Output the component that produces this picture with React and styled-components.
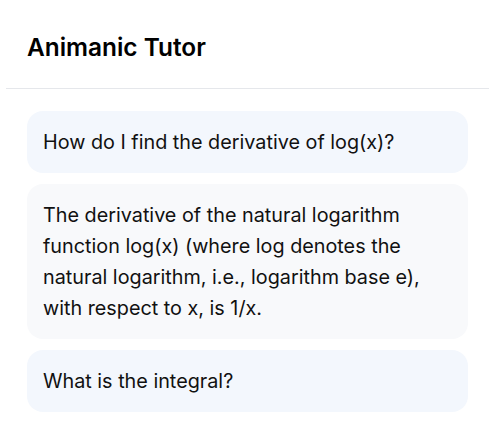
import React from "react";
import styled, { createGlobalStyle } from "styled-components";

const Global = createGlobalStyle`
  html, body { margin: 0; padding: 0; background: #ffffff; }
  body { font-family: Inter, "Noto Sans", sans-serif; color: #111111; }
`;

const Page = styled.div`
  padding: 0 11px 0 6px;
`;

const Header = styled.header`
  padding: 33px 21px 26px;
  border-bottom: 1px solid #e5e7eb;
`;

const Title = styled.h1`
  margin: 0;
  font-size: 24.4px;
  line-height: 29px;
  font-weight: 600;
  color: #000000;
`;

const MessageList = styled.div`
  display: flex;
  flex-direction: column;
  gap: 11px;
  padding: 22px 21px;
`;

const Bubble = styled.div`
  background: ${(p) => (p.$role === "user" ? "#f3f7fd" : "#f8f9fb")};
  border-radius: 16px;
  padding: 15.5px 16px;
  font-size: 19.8px;
  line-height: 31px;
  color: #111111;
`;

const messages = [
  { role: "user", text: "How do I find the derivative of log(x)?" },
  {
    role: "assistant",
    text: "The derivative of the natural logarithm function log(x) (where log denotes the natural logarithm, i.e., logarithm base e), with respect to x, is 1/x.",
  },
  { role: "user", text: "What is the integral?" },
];

export default function App() {
  return (
    <>
      <Global />
      <Page>
        <Header>
          <Title>Animanic Tutor</Title>
        </Header>
        <MessageList>
          {messages.map((m, i) => (
            <Bubble key={i} $role={m.role}>
              {m.text}
            </Bubble>
          ))}
        </MessageList>
      </Page>
    </>
  );
}
